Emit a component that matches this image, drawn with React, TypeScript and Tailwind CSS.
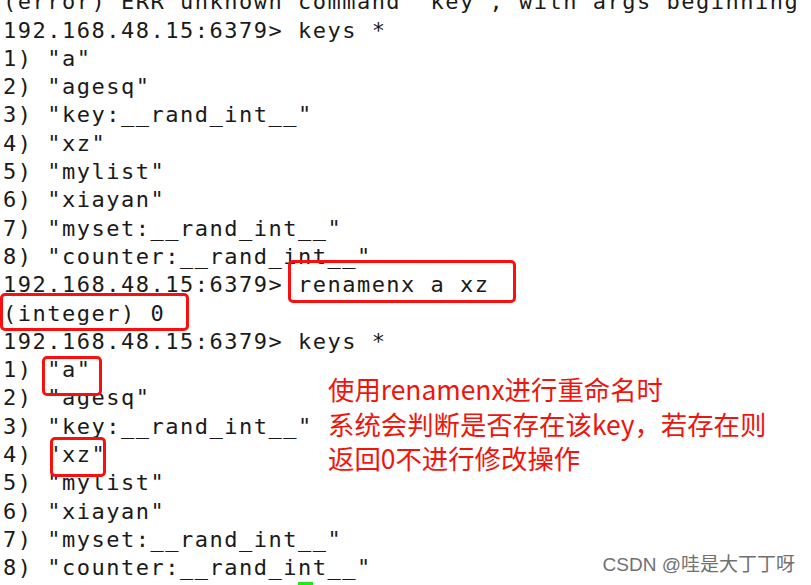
import React from 'react';

const PROMPT = '192.168.48.15:6379> ';

const keyList = [
  '1) "a"',
  '2) "agesq"',
  '3) "key:__rand_int__"',
  '4) "xz"',
  '5) "mylist"',
  '6) "xiayan"',
  '7) "myset:__rand_int__"',
  '8) "counter:__rand_int__"',
];

const lines = [
  '(error) ERR unknown command `key`, with args beginning with: ',
  PROMPT + 'keys *',
  ...keyList,
  PROMPT + 'renamenx a xz',
  '(integer) 0',
  PROMPT + 'keys *',
  ...keyList,
];

const RedBox: React.FC<{ className: string }> = ({ className }) => (
  <div className={`absolute border-[3px] border-[#fa0f0f] rounded-[5px] ${className}`} />
);

const App: React.FC = () => {
  return (
    <div className="relative w-[811px] h-[585px] overflow-hidden bg-white">
      {/* terminal output */}
      <div className="mt-[-11.75px] pl-[3px] font-['DejaVu_Sans_Mono','Liberation_Mono',monospace] text-[22px] leading-[28.3px] tracking-[1.5px] text-[#1a1a1a]">
        {lines.map((line, i) => (
          <div key={i} className="whitespace-pre">
            {line}
          </div>
        ))}
        <div className="flex whitespace-pre">
          <span>{PROMPT}</span>
          <span className="w-[14.74px] h-[28.3px] bg-[#1ee81e]" />
        </div>
      </div>

      {/* annotation boxes drawn over the output */}
      <RedBox className="left-[288px] top-[260px] w-[228px] h-[43px]" />
      <RedBox className="left-0 top-[293px] w-[189px] h-[38px]" />
      <RedBox className="left-[42px] top-[356px] w-[60px] h-[40px]" />
      <RedBox className="left-[50px] top-[437px] w-[56px] h-[40px]" />

      {/* note */}
      <div className="absolute left-[328px] top-[372px] font-['Noto_Sans_CJK_SC','Noto_Sans',sans-serif] text-[26.4px] leading-[34.5px] text-[#f0140c] whitespace-nowrap">
        <div>使用renamenx进行重命名时</div>
        <div>系统会判断是否存在该key，若存在则</div>
        <div>返回0不进行修改操作</div>
      </div>

      {/* watermark */}
      <div className="absolute right-[16px] top-[553px] font-['Liberation_Sans','Noto_Sans_CJK_SC',sans-serif] text-[19px] leading-[24px] text-[#707070] whitespace-nowrap">
        CSDN @哇是大丁丁呀
      </div>
    </div>
  );
};

export default App;
